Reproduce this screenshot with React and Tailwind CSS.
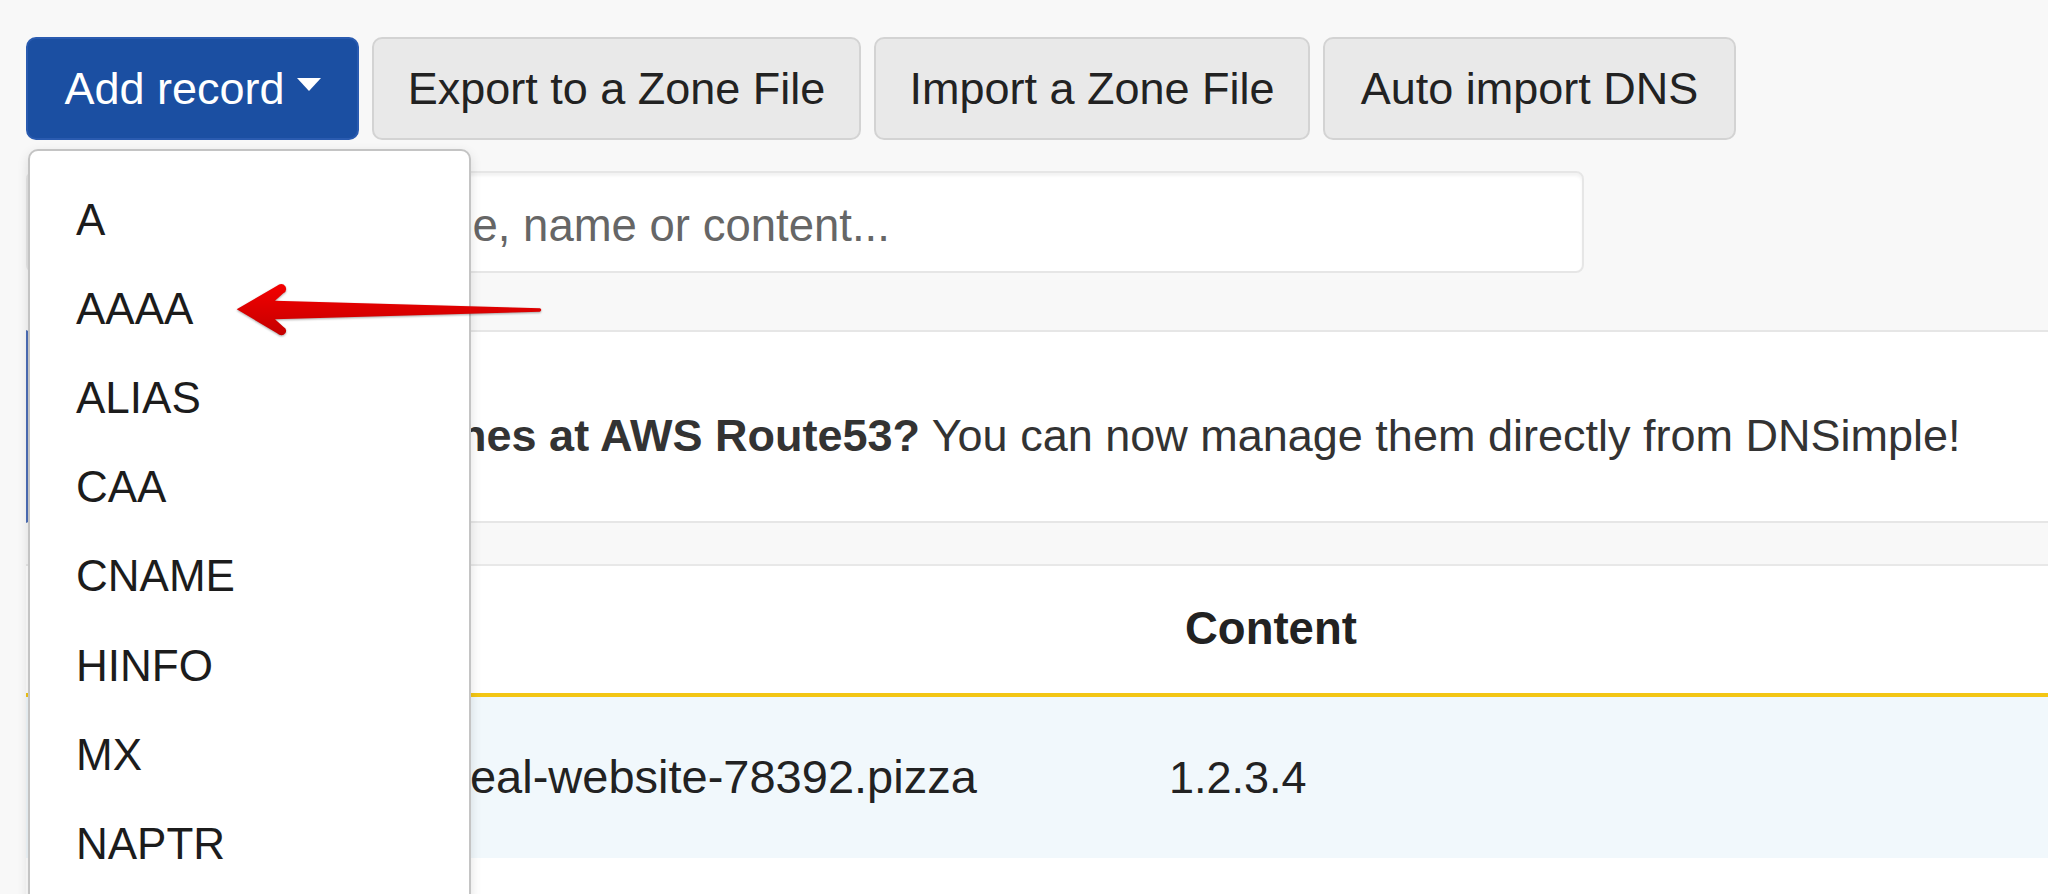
const recordTypes = ["A", "AAAA", "ALIAS", "CAA", "CNAME", "HINFO", "MX", "NAPTR"];

function Caret() {
  return (
    <span className="ml-[12px] inline-block h-0 w-0 border-x-[12px] border-t-[13px] border-x-transparent border-t-white translate-y-[-4px]" />
  );
}

function GrayButton({ children, width }) {
  return (
    <button className={`${width} h-[103px] rounded-[10px] border-2 border-[#d3d3d3] bg-[#e9e9e9] text-[45px] leading-none text-[#222] flex items-center justify-center`}>
      {children}
    </button>
  );
}

function Arrow() {
  return (
    <svg className="absolute left-[225px] top-[275px] drop-shadow-[0_1px_1px_rgba(0,0,0,0.35)]" width="330" height="70" viewBox="0 0 330 70">
      <defs>
        <linearGradient id="arrowFill" x1="0" y1="0" x2="0" y2="1">
          <stop offset="0" stopColor="#f40000" />
          <stop offset="1" stopColor="#c40000" />
        </linearGradient>
      </defs>
      <path
        d="M11.7 34.3 L51.7 11 Q57 7 60.5 11.5 Q62.5 16 58.3 18.3 L50 25.7 L315 33.3 Q317.5 35 315 36.7 L50 44.3 L58.3 51.7 Q62.5 54 60.5 58 Q57 62.5 51.7 58 Z"
        fill="url(#arrowFill)"
      />
    </svg>
  );
}

export default function App() {
  return (
    <div className="relative w-[2048px] h-[894px] overflow-hidden bg-[#f8f8f8] font-['Liberation_Sans',Arial,sans-serif] text-[#222]">
      <div className="w-[2400px] pt-[37px] pl-[26px]">
        {/* toolbar */}
        <div className="flex gap-[13px]">
          <button className="w-[333px] h-[103px] rounded-[10px] bg-[#1b4fa2] border-2 border-[#2a5bb0] text-white text-[45px] leading-none flex items-center justify-center">
            Add record
            <Caret />
          </button>
          <GrayButton width="w-[489px]">Export to a Zone File</GrayButton>
          <GrayButton width="w-[436px]">Import a Zone File</GrayButton>
          <GrayButton width="w-[413px]">Auto import DNS</GrayButton>
        </div>

        {/* filter */}
        <div className="mt-[31px] w-[1558px] h-[102px] rounded-[8px] border-2 border-[#e6e6e6] bg-white shadow-[inset_0_3px_3px_rgba(0,0,0,0.05)] flex items-center pl-[45px] pt-[8px] text-[45.5px] text-[#666]">
          Filter records by type, name or content...
        </div>

        {/* aws callout */}
        <div className="mt-[57px] h-[193px] border-y-2 border-[#e6e6e6] border-l-4 border-l-[#4d6fb8] bg-white flex items-center pl-[259px] pt-[18px] text-[45px] text-[#333]">
          <span>
            <b className="font-bold">Have zones at AWS Route53?</b> You can now manage them directly from DNSimple!
          </span>
        </div>

        {/* records table */}
        <div className="mt-[41px] border-t-2 border-[#e8e8e8] bg-white">
          <div className="h-[127px] flex items-center text-[45.5px] font-bold text-[#222]">
            <div className="w-[1159px]" />
            <div>Content</div>
          </div>
          <div className="h-[4px] bg-[#f3c614]" />
          <div className="h-[161px] bg-[#f1f8fc] flex items-center text-[45px] text-[#222]">
            <div className="w-[300px]" />
            <div className="w-[843px] pl-[50px] text-[47px]">my-real-website-78392.pizza</div>
            <div>1.2.3.4</div>
          </div>
          <div className="h-[200px] bg-white" />
        </div>
      </div>

      {/* dropdown menu */}
      <div className="absolute left-[28px] top-[149px] w-[443px] h-[900px] rounded-[10px] border-2 border-[#c4c4c4] bg-white shadow-[0_4px_12px_rgba(0,0,0,0.12)] pt-[24px]">
        {recordTypes.map((t) => (
          <div key={t} className="h-[89.2px] flex items-center pl-[46px] text-[44px] text-[#1c1c1c]">
            {t}
          </div>
        ))}
      </div>

      <Arrow />
    </div>
  );
}
